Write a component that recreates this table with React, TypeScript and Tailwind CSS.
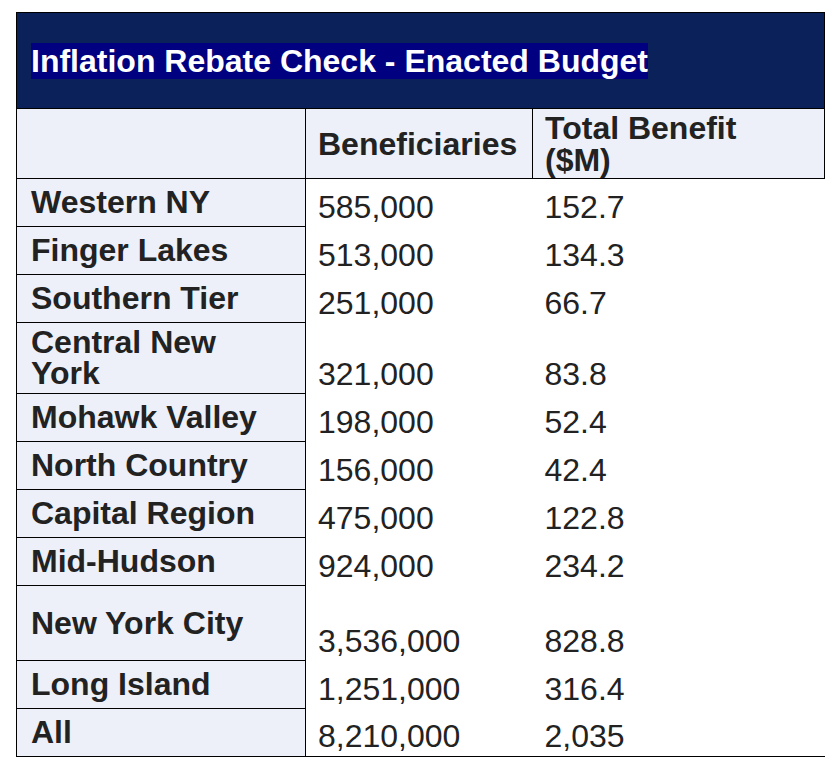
import React from "react";

type Row = { name: React.ReactNode; ben: string; tot: string; h: string };

const rows: Row[] = [
  { name: "Western NY", ben: "585,000", tot: "152.7", h: "h-[48px]" },
  { name: "Finger Lakes", ben: "513,000", tot: "134.3", h: "h-[48px]" },
  { name: "Southern Tier", ben: "251,000", tot: "66.7", h: "h-[48px]" },
  {
    name: (
      <>
        Central New
        <br />
        York
      </>
    ),
    ben: "321,000",
    tot: "83.8",
    h: "h-[70px]",
  },
  { name: "Mohawk Valley", ben: "198,000", tot: "52.4", h: "h-[48px]" },
  { name: "North Country", ben: "156,000", tot: "42.4", h: "h-[48px]" },
  { name: "Capital Region", ben: "475,000", tot: "122.8", h: "h-[48px]" },
  { name: "Mid-Hudson", ben: "924,000", tot: "234.2", h: "h-[48px]" },
  { name: "New York City", ben: "3,536,000", tot: "828.8", h: "h-[75px]" },
  { name: "Long Island", ben: "1,251,000", tot: "316.4", h: "h-[48px]" },
  { name: "All", ben: "8,210,000", tot: "2,035", h: "h-[48px]" },
];

export default function App() {
  return (
    <div
      className="min-h-[770px] w-[840px] bg-white pl-[16px] pt-[12px] text-[#222222]"
      style={{ fontFamily: '"Liberation Sans", Arial, sans-serif' }}
    >
      <table className="w-[808px] table-fixed border-collapse text-[32px]">
        <colgroup>
          <col className="w-[289px]" />
          <col className="w-[227px]" />
          <col className="w-[292px]" />
        </colgroup>
        <tbody>
          <tr className="h-[96px]">
            <td
              colSpan={3}
              className="border border-black bg-[#0a2259] px-[14px] align-middle"
            >
              <span className="bg-[#000080] font-bold leading-normal text-white">
                Inflation Rebate Check - Enacted Budget
              </span>
            </td>
          </tr>
          <tr className="h-[70px]">
            <td className="border border-black bg-[#edf0f8]"></td>
            <td className="border border-black bg-[#edf0f8] px-[12px] align-middle font-bold leading-[32px]">
              Beneficiaries
            </td>
            <td className="border border-black bg-[#edf0f8] px-[12px] align-middle font-bold leading-[32px]">
              Total Benefit
              <br />
              ($M)
            </td>
          </tr>
          {rows.map((r, i) => {
            const last = i === rows.length - 1;
            return (
              <tr key={i} className={r.h}>
                <td className="border border-black bg-[#edf0f8] px-[14px] py-[4px] align-middle font-bold leading-[31px]">
                  {r.name}
                </td>
                <td
                  className={
                    last
                      ? "border-b border-black pl-[12px] pb-[4px] align-bottom leading-[31px]"
                      : "pl-[12px] pb-[4px] align-bottom leading-[31px]"
                  }
                >
                  {r.ben}
                </td>
                <td
                  className={
                    last
                      ? "border-b border-black pl-[12px] pb-[4px] align-bottom leading-[31px]"
                      : "pl-[12px] pb-[4px] align-bottom leading-[31px]"
                  }
                >
                  {r.tot}
                </td>
              </tr>
            );
          })}
        </tbody>
      </table>
    </div>
  );
}
